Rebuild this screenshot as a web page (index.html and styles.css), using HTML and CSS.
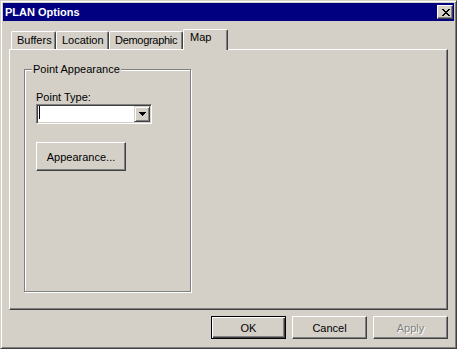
FILE: index.html
```html
<!DOCTYPE html>
<html lang="en">
<head>
    <meta charset="UTF-8">
    <title>PLAN Options</title>
    <link rel="stylesheet" href="styles.css">
</head>
<body>

    <div class="window">
        <div class="titlebar">
            <span class="title">PLAN Options</span>
            <button class="close-btn">
                <svg width="8" height="7" viewBox="0 0 8 7" shape-rendering="crispEdges">
                    <path d="M0 0h2v1H0z M6 0h2v1H6z M1 1h2v1H1z M5 1h2v1H5z M2 2h4v1H2z M3 3h2v1H3z M2 4h4v1H2z M1 5h2v1H1z M5 5h2v1H5z M0 6h2v1H0z M6 6h2v1H6z" fill="#000"/>
                </svg>
            </button>
        </div>

        <div class="dialog-body">
            <div class="tabs">
                <div class="tab tab-buffers">Buffers</div>
                <div class="tab tab-location">Location</div>
                <div class="tab tab-demographic">Demographic</div>
                <div class="tab tab-map active">Map</div>
            </div>

            <div class="tab-panel">
                <div class="group">
                    <span class="group-label">Point Appearance</span>
                    <label class="field-label">Point Type:</label>
                    <div class="combo">
                        <span class="combo-text"><span class="caret"></span></span>
                        <span class="combo-btn">
                            <svg width="7" height="4" viewBox="0 0 7 4" shape-rendering="crispEdges">
                                <path d="M0 0h7v1H0z M1 1h5v1H1z M2 2h3v1H2z M3 3h1v1H3z" fill="#000"/>
                            </svg>
                        </span>
                    </div>
                    <button class="btn btn-appearance">Appearance...</button>
                </div>
            </div>

            <div class="buttons">
                <button class="btn btn-default">OK</button>
                <button class="btn">Cancel</button>
                <button class="btn" disabled>Apply</button>
            </div>
        </div>
    </div>

</body>
</html>
```

FILE: styles.css
```css
body {
    margin: 0;
    font-family: "Liberation Sans", Arial, sans-serif;
    font-size: 11px;
    color: #000;
    background-color: #d4d0c8;
}
.window {
    width: 457px;
    height: 349px;
    box-sizing: border-box;
    padding: 2px;
    background: #d4d0c8;
    border: 1px solid;
    border-color: #d4d0c8 #404040 #404040 #d4d0c8;
    box-shadow: inset 1px 1px 0 #fff, inset -1px -1px 0 #808080;
}
.titlebar {
    height: 18px;
    display: flex;
    align-items: center;
    justify-content: space-between;
    background: #000080;
    padding: 0 2px;
}
.title {
    color: #fff;
    font-weight: bold;
    line-height: 18px;
}
.close-btn {
    width: 16px;
    height: 14px;
    padding: 0 0 0 1px;
    margin-right: -1px;
    display: flex;
    align-items: center;
    justify-content: center;
    background: #d4d0c8;
    border: 1px solid;
    border-color: #fff #404040 #404040 #fff;
    box-shadow: inset -1px -1px 0 #808080;
}
.dialog-body {
    padding: 8px 6px 7px 6px;
}
.tabs {
    display: flex;
    align-items: flex-end;
    height: 20px;
    margin-left: 2px;
}
.tab {
    box-sizing: border-box;
    height: 18px;
    line-height: 16px;
    padding-left: 5px;
    background: #d4d0c8;
    border-top: 1px solid #fff;
    border-left: 1px solid #fff;
    border-right: 1px solid #404040;
    border-radius: 2px 2px 0 0;
    box-shadow: inset -1px 0 0 #808080;
    white-space: nowrap;
    overflow: hidden;
}
.tab-buffers { width: 45px; }
.tab-location { width: 53px; }
.tab-demographic { width: 74px; letter-spacing: -0.3px; }
.tab-map { width: 45px; }
.tab.active {
    position: relative;
    z-index: 1;
    height: 21px;
    margin-bottom: -1px;
    line-height: 14px;
    padding-left: 6px;
}
.tab-panel {
    box-sizing: border-box;
    width: 439px;
    height: 261px;
    padding: 19px 0 0 14px;
    border: 1px solid;
    border-color: #fff #404040 #404040 #fff;
    box-shadow: inset -1px -1px 0 #808080;
}
.group {
    position: relative;
    box-sizing: border-box;
    width: 167px;
    height: 223px;
    padding: 21px 0 0 11px;
    border: 1px solid #808080;
    box-shadow: inset 1px 1px 0 #fff, 1px 1px 0 #fff;
}
.group-label {
    position: absolute;
    top: -7px;
    left: 7px;
    padding: 0 1px;
    line-height: 13px;
    background: #d4d0c8;
}
.field-label {
    display: block;
    line-height: 13px;
}
.combo {
    box-sizing: border-box;
    width: 116px;
    height: 20px;
    display: flex;
    padding: 1px;
    background: #fff;
    border: 1px solid;
    border-color: #808080 #fff #fff #808080;
    box-shadow: inset 1px 1px 0 #404040, inset -1px -1px 0 #d4d0c8;
}
.combo-text {
    flex: 1;
    padding-left: 1px;
}
.caret {
    display: block;
    width: 1px;
    height: 13px;
    background: #000;
}
.combo-btn {
    box-sizing: border-box;
    width: 16px;
    height: 16px;
    display: flex;
    align-items: center;
    justify-content: center;
    background: #d4d0c8;
    border: 1px solid;
    border-color: #d4d0c8 #404040 #404040 #d4d0c8;
    box-shadow: inset 1px 1px 0 #fff, inset -1px -1px 0 #808080;
}
.btn {
    box-sizing: border-box;
    width: 75px;
    height: 23px;
    padding: 0;
    font: inherit;
    color: #000;
    background: #d4d0c8;
    border: 1px solid;
    border-color: #fff #404040 #404040 #fff;
    box-shadow: inset -1px -1px 0 #808080;
}
.btn-appearance {
    display: block;
    width: 90px;
    height: 29px;
    margin-top: 18px;
}
.btn-default {
    border-color: #000;
    box-shadow: inset 1px 1px 0 #fff, inset -1px -1px 0 #404040, inset -2px -2px 0 #808080;
}
.btn:disabled {
    color: #808080;
    text-shadow: 1px 1px 0 #fff;
}
.buttons {
    display: flex;
    justify-content: flex-end;
    gap: 6px;
    margin-top: 6px;
}
```
